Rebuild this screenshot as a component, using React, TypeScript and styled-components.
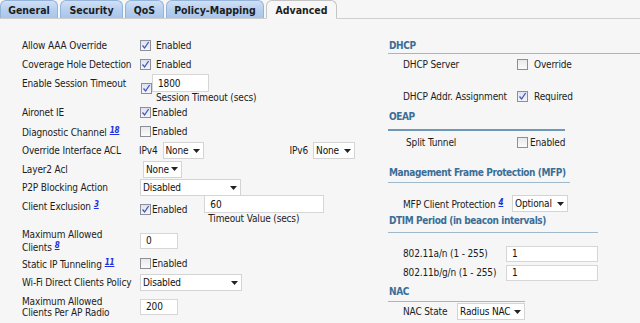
import React from "react";
import styled, { createGlobalStyle } from "styled-components";

const Global = createGlobalStyle`
  html, body { margin: 0; padding: 0; background: #f6f6f6; }
  body { font-family: "DejaVu Sans Condensed", "DejaVu Sans", "Liberation Sans", sans-serif; font-size: 10px; letter-spacing: -0.15px; color: #1c1c1c; }
  * { box-sizing: border-box; }
`;

const Page = styled.div`
  width: 640px;
  height: 323px;
  overflow: hidden;
  background: #f6f6f6;
`;

const TabBar = styled.div`
  display: flex;
  align-items: flex-end;
  height: 19px;
  border-bottom: 1px solid #cfcfcf;
  gap: 2px;
`;

const Tab = styled.div<{ $active?: boolean; $w: number }>`
  width: ${(p) => p.$w}px;
  height: ${(p) => (p.$active ? 19 : 18)}px;
  margin-bottom: ${(p) => (p.$active ? -1 : 0)}px;
  display: flex;
  align-items: center;
  justify-content: center;
  font-weight: bold;
  font-size: 10.5px;
  letter-spacing: 0;
  color: #1d1d1d;
  border-radius: 6px 6px 0 0;
  border: 1px solid ${(p) => (p.$active ? "#c4c4c4" : "#93b3d8")};
  border-bottom: ${(p) => (p.$active ? "1px solid #f6f6f6" : "none")};
  background: ${(p) =>
    p.$active ? "#f7f7f7" : "linear-gradient(#cfe0f5, #b2cdee 60%, #a9c6ea)"};
`;

const Content = styled.div`
  display: flex;
  padding-top: 16px;
`;

const LeftCol = styled.div`
  width: 388px;
  padding-left: 22px;
  display: flex;
  flex-direction: column;
`;

const RightCol = styled.div`
  flex: 1;
  display: flex;
  flex-direction: column;
`;

const Row = styled.div<{ $h: number; $mt?: number; $top?: boolean }>`
  display: flex;
  align-items: ${(p) => (p.$top ? "flex-start" : "center")};
  height: ${(p) => p.$h}px;
  margin-top: ${(p) => p.$mt ?? 0}px;
  flex-shrink: 0;
`;

const Label = styled.div<{ $w: number; $pt?: number }>`
  width: ${(p) => p.$w}px;
  flex-shrink: 0;
  line-height: 11px;
  padding-top: ${(p) => p.$pt ?? 0}px;
  white-space: nowrap;
`;

const Controls = styled.div<{ $gap?: number }>`
  display: flex;
  align-items: center;
  gap: ${(p) => p.$gap ?? 0}px;
  white-space: nowrap;
`;

const Sup = styled.a`
  color: #1c2ee0;
  font-weight: bold;
  font-style: italic;
  font-size: 8px;
  text-decoration: underline;
  vertical-align: 3px;
  margin-left: 3px;
`;

const Box = styled.span<{ $on?: boolean }>`
  display: inline-flex;
  align-items: center;
  justify-content: center;
  width: 11px;
  height: 11px;
  border: 1px solid #8e8e96;
  background: ${(p) => (p.$on ? "linear-gradient(#dfe2f4, #f4f5fb)" : "linear-gradient(#e9e9e9, #fbfbfb)")};
  flex-shrink: 0;
`;

const CheckText = styled.span<{ $gap: number }>`
  margin-left: ${(p) => p.$gap}px;
`;

const Tick = () => (
  <svg width="9" height="9" viewBox="0 0 9 9">
    <path d="M1.5 4.5 L3.6 7 L7.6 1" stroke="#4356b8" strokeWidth="1.3" fill="none" />
  </svg>
);

const Check = ({ on, text, gap = 4 }: { on?: boolean; text?: string; gap?: number }) => (
  <Controls>
    <Box $on={on}>{on && <Tick />}</Box>
    {text && <CheckText $gap={gap}>{text}</CheckText>}
  </Controls>
);

const Field = styled.input<{ $w: number; $h?: number }>`
  width: ${(p) => p.$w}px;
  height: ${(p) => p.$h ?? 17}px;
  border: 1px solid #d6d6d6;
  background: #fff;
  font: inherit;
  letter-spacing: inherit;
  color: #111;
  padding: 0 0 0 5px;
  margin: 0;
  outline: none;
`;

const SelectBox = styled.div<{ $w: number }>`
  width: ${(p) => p.$w}px;
  height: 17px;
  border: 1px solid #d4d4d4;
  background: #fff;
  display: flex;
  align-items: center;
  justify-content: space-between;
  padding: 0 3px 0 2px;
  color: #111;
  flex-shrink: 0;
  white-space: nowrap;
`;

const Select = ({ w, value }: { w: number; value: string }) => (
  <SelectBox $w={w}>
    <span>{value}</span>
    <svg width="7" height="4" viewBox="0 0 7 4">
      <path d="M0 0 H7 L3.5 4 Z" fill="#222" />
    </svg>
  </SelectBox>
);

const Stack = styled.div<{ $ml?: number }>`
  display: flex;
  flex-direction: column;
  margin-left: ${(p) => p.$ml ?? 0}px;
`;

const Caption = styled.div`
  margin-left: 4px;
  line-height: 11px;
  white-space: nowrap;
`;

const Small = styled.span<{ $ml?: number; $mr?: number }>`
  margin-left: ${(p) => p.$ml ?? 0}px;
  margin-right: ${(p) => p.$mr ?? 0}px;
`;

const Head = styled.div<{ $w?: number; $mt: number; $pb: number; $bw?: number; $bc?: string }>`
  width: ${(p) => (p.$w ? `${p.$w}px` : "auto")};
  margin-top: ${(p) => p.$mt}px;
  padding: 0 0 ${(p) => p.$pb}px 1px;
  line-height: 15px;
  font-weight: bold;
  letter-spacing: -0.4px;
  color: #3a6e96;
  white-space: nowrap;
  border-bottom: ${(p) => p.$bw ?? 1}px solid ${(p) => p.$bc ?? "#9fb8ca"};
  flex-shrink: 0;
`;

const RRow = styled(Row)<{ $pl?: number }>`
  padding-left: ${(p) => p.$pl ?? 15}px;
`;

export default function App() {
  return (
    <Page>
      <Global />
      <TabBar>
        <Tab $w={58}>General</Tab>
        <Tab $w={63}>Security</Tab>
        <Tab $w={39}>QoS</Tab>
        <Tab $w={98}>Policy-Mapping</Tab>
        <Tab $w={71} $active>Advanced</Tab>
      </TabBar>
      <Content>
        <LeftCol>
          <Row $h={19} $mt={1}>
            <Label $w={118}>Allow AAA Override</Label>
            <Check on text="Enabled" gap={5} />
          </Row>
          <Row $h={19}>
            <Label $w={118}>Coverage Hole Detection</Label>
            <Check on text="Enabled" gap={5} />
          </Row>
          <Row $h={29} $top>
            <Label $w={119} $pt={4}>Enable Session Timeout</Label>
            <Controls>
              <Box $on>
                <Tick />
              </Box>
              <Stack>
                <Field $w={57} $h={18} readOnly value="1800" />
                <Caption>Session Timeout (secs)</Caption>
              </Stack>
            </Controls>
          </Row>
          <Row $h={19}>
            <Label $w={118}>Aironet IE</Label>
            <Check on text="Enabled" gap={1} />
          </Row>
          <Row $h={19}>
            <Label $w={118}>
              Diagnostic Channel<Sup>18</Sup>
            </Label>
            <Check text="Enabled" gap={1} />
          </Row>
          <Row $h={19}>
            <Label $w={117}>Override Interface ACL</Label>
            <Small $mr={5}>IPv4</Small>
            <Select w={41} value="None" />
            <Small $ml={86} $mr={5}>IPv6</Small>
            <Select w={42} value="None" />
          </Row>
          <Row $h={18}>
            <Label $w={121}>Layer2 Acl</Label>
            <Select w={39} value="None" />
          </Row>
          <Row $h={19}>
            <Label $w={118}>P2P Blocking Action</Label>
            <Select w={101} value="Disabled" />
          </Row>
          <Row $h={32} $mt={-2} $top>
            <Label $w={118} $pt={4}>
              Client Exclusion<Sup>3</Sup>
            </Label>
            <Controls>
              <Check on text="Enabled" gap={1} />
              <Stack $ml={17}>
                <Field $w={120} $h={18} readOnly value="60" />
                <Caption>Timeout Value (secs)</Caption>
              </Stack>
            </Controls>
          </Row>
          <Row $h={27}>
            <Label $w={118}>
              Maximum Allowed
              <br />
              Clients<Sup>8</Sup>
            </Label>
            <Field $w={38} $h={16} readOnly value="0" />
          </Row>
          <Row $h={19}>
            <Label $w={118}>
              Static IP Tunneling<Sup>11</Sup>
            </Label>
            <Check text="Enabled" gap={1} />
          </Row>
          <Row $h={19}>
            <Label $w={118}>Wi-Fi Direct Clients Policy</Label>
            <Select w={102} value="Disabled" />
          </Row>
          <Row $h={29}>
            <Label $w={118}>
              Maximum Allowed
              <br />
              Clients Per AP Radio
            </Label>
            <Field $w={38} $h={16} readOnly value="200" />
          </Row>
        </LeftCol>

        <RightCol>
          <Head $mt={3} $pb={0}>DHCP</Head>
          <RRow $h={19} $mt={1}>
            <Label $w={114}>DHCP Server</Label>
            <Check text="Override" gap={6} />
          </RRow>
          <RRow $h={19} $mt={13}>
            <Label $w={114}>DHCP Addr. Assignment</Label>
            <Check on text="Required" gap={6} />
          </RRow>
          <Head $w={177} $mt={3} $pb={5} $bw={2} $bc="#6f98b8">
            OEAP
          </Head>
          <RRow $h={19} $mt={2} $pl={18}>
            <Label $w={111}>Split Tunnel</Label>
            <Check text="Enabled" gap={2} />
          </RRow>
          <Head $w={182} $mt={13} $pb={2}>
            Management Frame Protection (MFP)
          </Head>
          <RRow $h={19} $mt={11}>
            <Label $w={109}>
              MFP Client Protection<Sup>4</Sup>
            </Label>
            <Select w={56} value="Optional" />
          </RRow>
          <Head $w={210} $mt={0} $pb={4}>
            DTIM Period (in beacon intervals)
          </Head>
          <RRow $h={19} $mt={11}>
            <Label $w={103}>802.11a/n (1 - 255)</Label>
            <Field $w={92} $h={16} readOnly value="1" />
          </RRow>
          <RRow $h={19}>
            <Label $w={103}>802.11b/g/n (1 - 255)</Label>
            <Field $w={92} $h={16} readOnly value="1" />
          </RRow>
          <Head $w={137} $mt={2} $pb={2}>
            NAC
          </Head>
          <RRow $h={19}>
            <Label $w={54}>NAC State</Label>
            <Select w={68} value="Radius NAC" />
          </RRow>
        </RightCol>
      </Content>
    </Page>
  );
}
